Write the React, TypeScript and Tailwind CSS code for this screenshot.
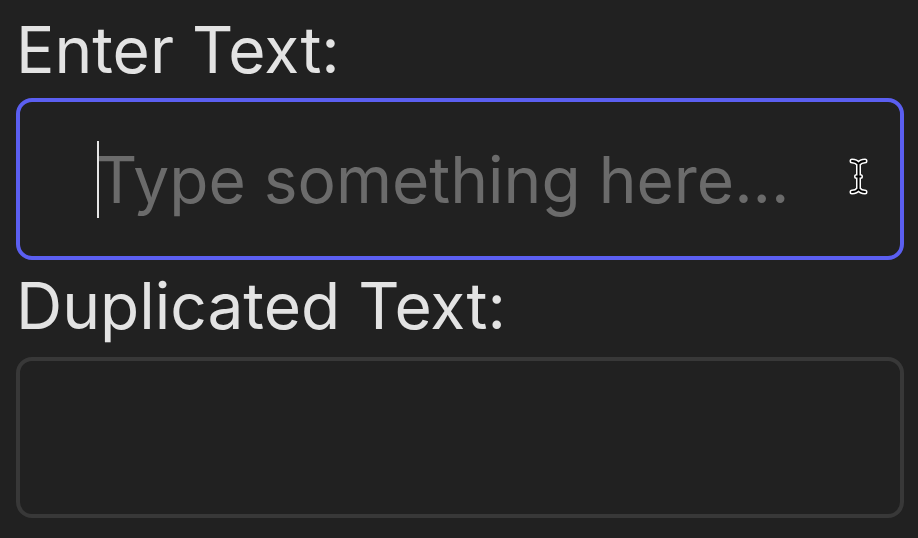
import React, { useState } from "react";

function IBeam() {
  return (
    <svg width="21" height="39" viewBox="0 0 21 39" className="pointer-events-none absolute left-[832px] top-[59px]">
      <g fill="none" strokeLinecap="round" strokeLinejoin="round">
        <path
          d="M4 4C6.5 4 9 5 10.5 7C12 5 14.5 4 17 4M10.5 7V32M4 35C6.5 35 9 34 10.5 32C12 34 14.5 35 17 35M8.5 19.5H12.5"
          stroke="#ffffff"
          strokeWidth="5"
        />
        <path
          d="M4 4C6.5 4 9 5 10.5 7C12 5 14.5 4 17 4M10.5 7V32M4 35C6.5 35 9 34 10.5 32C12 34 14.5 35 17 35M8.5 19.5H12.5"
          stroke="#000000"
          strokeWidth="2"
        />
      </g>
    </svg>
  );
}

export default function App() {
  const [text, setText] = useState("");

  return (
    <div className="h-[538px] w-[918px] overflow-hidden bg-[#212121] pl-4 pr-[14px] pt-[18px] font-['Inter',sans-serif]">
      <label className="block text-[64px] leading-[64px] text-[#e3e3e3]">Enter Text:</label>

      <div className="relative mt-4">
        <input
          value={text}
          onChange={(e) => setText(e.target.value)}
          placeholder="Type something here..."
          className="h-[162px] w-full rounded-[16px] border-4 border-[#5b5ff1] bg-[#212121] pl-[76px] pr-6 text-[64px] text-[#e3e3e3] caret-transparent outline-none placeholder:text-[#6b6b6b]"
        />
        {/* static text caret */}
        <span className="pointer-events-none absolute left-[81px] top-[43px] h-[77px] w-[2px] bg-[#e6e6e6]" />
        <IBeam />
      </div>

      <label className="mt-[14px] block text-[64px] leading-[64px] text-[#e3e3e3]">Duplicated Text:</label>

      <div className="mt-[19px] h-[161px] w-full rounded-[16px] border-4 border-[#383838] bg-[#212121] pl-[76px] text-[64px] leading-[153px] text-[#e3e3e3]">
        {text}
      </div>
    </div>
  );
}
